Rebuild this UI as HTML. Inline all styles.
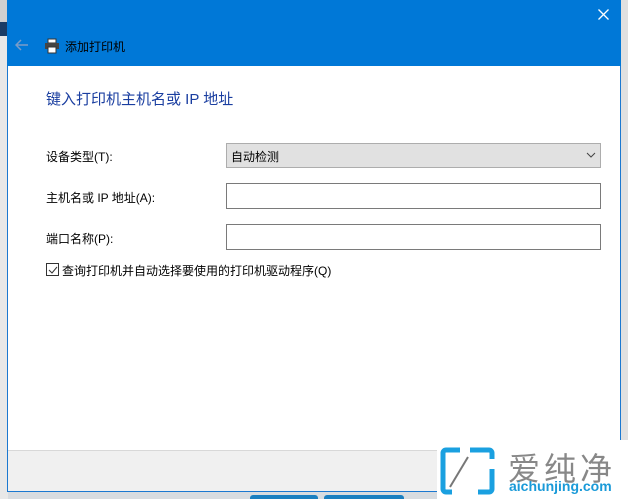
<!DOCTYPE html><html><head><meta charset="utf-8"><style>
*{margin:0;padding:0;box-sizing:border-box}
body{width:628px;height:499px;overflow:hidden;background:#d8dce0;position:relative;font-family:"Liberation Sans","Noto Sans CJK SC",sans-serif;font-size:12px;color:#000}
.a{position:absolute}
</style></head><body>
<div class="a" style="left:0;top:0;width:8px;height:499px;background:#e8e8e8"></div>
<div class="a" style="left:0;top:0;width:8px;height:22px;background:#d0d0d0"></div>
<div class="a" style="left:0;top:22px;width:8px;height:14px;background:#1a3c66"></div>
<div class="a" style="left:620px;top:0;width:8px;height:499px;background:#e0e0e0"></div>
<div class="a" style="left:7px;top:0;width:614px;height:492px;background:#fff;border:1px solid #1b78d0"></div>
<div class="a" style="left:7px;top:0;width:614px;height:66px;background:#0078d7"></div>
<svg class="a" style="left:598px;top:9px" width="11" height="11"><path d="M0.5 0.5L10.5 10.5M10.5 0.5L0.5 10.5" stroke="#fff" stroke-width="1.3"/></svg>
<svg class="a" style="left:15px;top:39px" width="14" height="12"><path d="M1 6H13M6 1L1 6L6 11" stroke="#7a9cc8" stroke-width="1.5" fill="none"/></svg>
<svg class="a" style="left:44px;top:38px" width="16" height="16"><rect x="4" y="1" width="8" height="4" fill="#fff" stroke="#333"/><rect x="1" y="5" width="14" height="6" fill="#444"/><rect x="4" y="9" width="8" height="6" fill="#fff" stroke="#333"/></svg>
<div class="a" style="left:65px;top:38px;font-size:12px;color:#000">添加打印机</div>
<div class="a" style="left:46px;top:88px;font-size:15px;color:#1a3ea0">键入打印机主机名或 IP 地址</div>
<div class="a" style="left:46px;top:148px">设备类型(T):</div>
<div class="a" style="left:46px;top:189px">主机名或 IP 地址(A):</div>
<div class="a" style="left:46px;top:230px">端口名称(P):</div>
<div class="a" style="left:226px;top:143px;width:375px;height:25px;background:#e1e1e1;border:1px solid #adadad;padding:4px 4px">自动检测</div>
<svg class="a" style="left:586px;top:152px" width="10" height="7"><path d="M1 1L5 5L9 1" stroke="#444" fill="none"/></svg>
<div class="a" style="left:226px;top:183px;width:375px;height:26px;border:1px solid #7a7a7a"></div>
<div class="a" style="left:226px;top:224px;width:375px;height:26px;border:1px solid #7a7a7a"></div>
<div class="a" style="left:46px;top:263px;width:13px;height:13px;border:1px solid #333"></div>
<svg class="a" style="left:47px;top:264px" width="12" height="12"><path d="M2 6L5 9L10 3" stroke="#333" fill="none"/></svg>
<div class="a" style="left:62px;top:262px">查询打印机并自动选择要使用的打印机驱动程序(Q)</div>
<div class="a" style="left:8px;top:450px;width:612px;height:41px;background:#f0f0f0;border-top:1px solid #d8d8d8"></div>
<div class="a" style="left:250px;top:495px;width:68px;height:4px;background:#1a7fc0;border-radius:3px 3px 0 0"></div>
<div class="a" style="left:324px;top:495px;width:80px;height:4px;background:#1a7fc0;border-radius:3px 3px 0 0"></div>
<div class="a" style="left:437px;top:440px;width:191px;height:59px;background:#fff"></div>
<svg class="a" style="left:440px;top:447px" width="56" height="48"><path d="M20 3H6a3 3 0 0 0-3 3V42a3 3 0 0 0 3 3H12" stroke="#1aa0e0" stroke-width="5" fill="none"/><path d="M30 3H49a3 3 0 0 1 3 3V12M52 22V42a3 3 0 0 1-3 3H38" stroke="#1aa0e0" stroke-width="5" fill="none"/><path d="M10 40L28 10" stroke="#777" stroke-width="2"/></svg>
<div class="a" style="left:508px;top:444px;font-size:32px;color:#888;letter-spacing:4px">爱纯净</div>
<div class="a" style="left:509px;top:478px;font-size:14px;color:#1a9ad8;font-weight:bold">aichunjing.com</div>
</body></html>
